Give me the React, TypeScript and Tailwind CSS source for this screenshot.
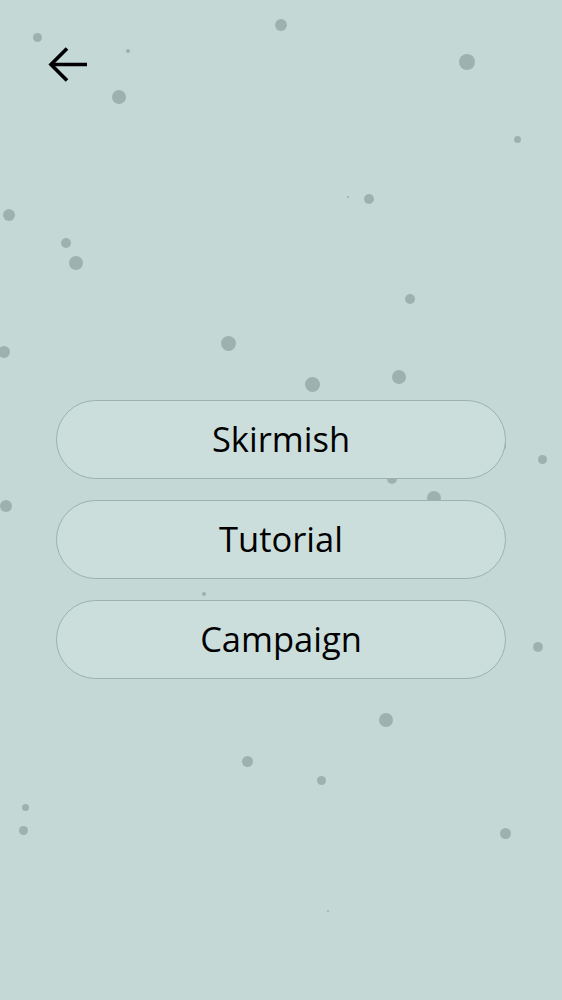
import React from "react";

const dots: [number, number, number][] = [
  [37, 37, 4.5], [128, 51, 2], [281, 25, 6], [467, 62, 8], [119, 97, 7], [517, 139, 3.5],
  [369, 199, 5], [348, 197, 1], [9, 215, 6], [66, 243, 5], [76, 263, 7], [410, 299, 5],
  [4, 352, 6], [228, 343, 7.5], [312, 384, 7.5], [399, 377, 7], [542, 459, 4.5],
  [6, 506, 6], [434, 498, 7], [392, 479, 5], [502, 446, 4], [204, 594, 2], [538, 647, 5],
  [386, 720, 7], [247, 761, 5.5], [321, 780, 4.5], [25, 807, 3.5], [23, 830, 4.5],
  [505, 833, 5.5], [328, 911, 1],
];

export default function App() {
  return (
    <div className="relative w-[562px] h-[1000px] overflow-hidden bg-[#c4d8d6]" style={{ fontFamily: '"Open Sans", "Noto Sans", sans-serif' }}>
      {dots.map(([x, y, r], i) => (
        <div
          key={i}
          className="absolute rounded-full bg-[#9fb1af]"
          style={{ left: x - r, top: y - r, width: r * 2, height: r * 2 }}
        />
      ))}
      <div className="relative flex flex-col">
        <div className="pl-[48px] pt-[46px] h-[400px]">
          <svg width="40" height="38" viewBox="0 0 40 38" fill="none" stroke="#000" strokeWidth="3.6" strokeLinecap="butt">
            <path d="M19 2.5 L3 18.5 L19 34.5" />
            <path d="M3 18.5 H39" />
          </svg>
        </div>
        <div className="flex flex-col gap-[21px] pl-[56px]">
          {["Skirmish", "Tutorial", "Campaign"].map((t) => (
            <button
              key={t}
              className="w-[450px] h-[79px] rounded-full border-[1.5px] border-[#9db1af] bg-[#cbdedc] text-[34.5px] text-black flex items-center justify-center"
            >
              <span className="-mt-[1px]">{t}</span>
            </button>
          ))}
        </div>
      </div>
    </div>
  );
}
